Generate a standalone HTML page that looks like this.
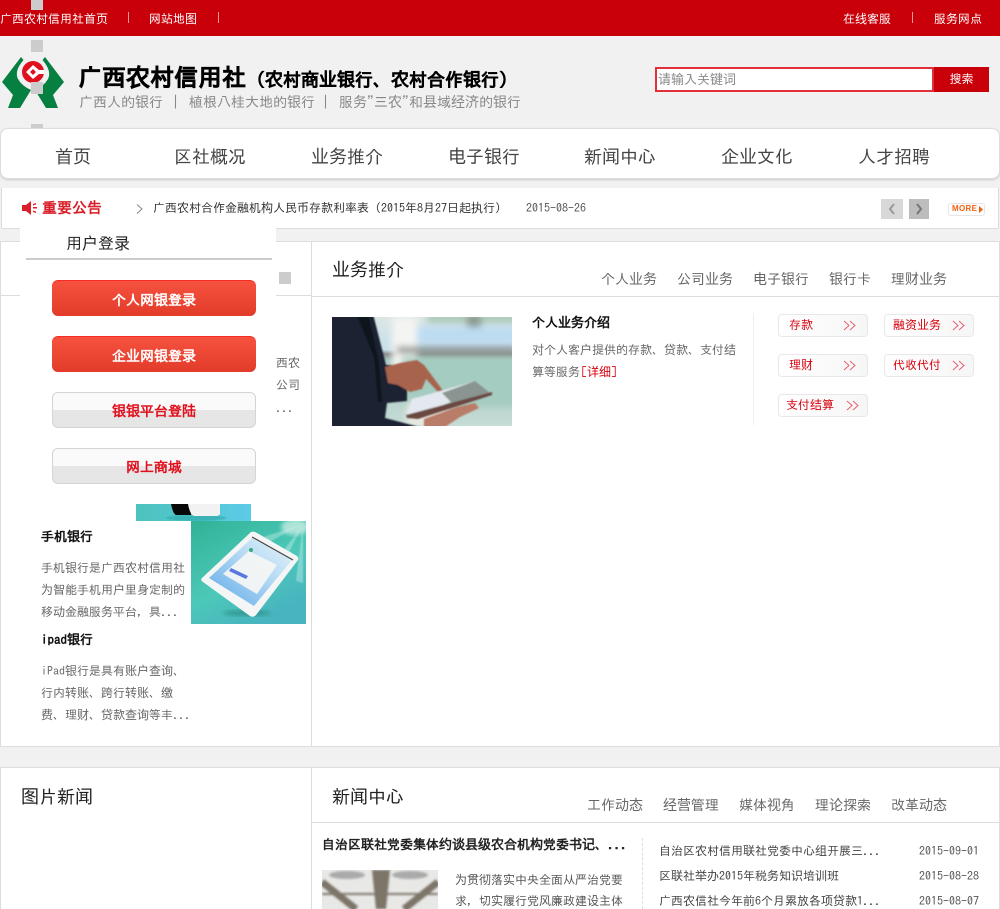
<!DOCTYPE html>
<html style="height:909px;overflow:hidden"><head><meta charset="utf-8"><title>广西农村信用社</title>
<style>
html,body{margin:0;padding:0}
body{width:1000px;height:909px;overflow:hidden;position:relative;background:#f1f1f1;font-family:"IPAGothic","WenQuanYi Zen Hei",sans-serif;font-size:12px}
body *{box-sizing:border-box}
.a{position:absolute}
.t{position:absolute;white-space:nowrap;line-height:20px;height:20px}
.sq{position:absolute;left:31px;width:12px;background:#ccc}
.sep{position:absolute;top:12px;width:1px;height:11px;background:#f09a9e}
.nv{position:absolute;top:144px;width:100px;text-align:center;font-size:18px;line-height:26px;color:#444;white-space:nowrap}
.g{color:#666}
.bh{font-size:13px;font-weight:bold;color:#111}
.btn{position:absolute;left:52px;width:204px;height:36px;border-radius:6px;text-align:center;font-weight:bold;font-size:14px;line-height:38px;color:#fff;background:linear-gradient(#f6523f,#e23b2a);border-top:1px solid #f52c25}
.btn.w{background:linear-gradient(#fafafa 50%,#e6e6e6 50%);border:1px solid #d4d4d4;color:#e0101e;line-height:36px}
.rb{position:absolute;width:90px;height:23px;border:1px solid #e8e8e8;border-radius:4px;background:linear-gradient(90deg,#fff,#f6f6f6);color:#d8000f;line-height:21px}
.rb span{position:absolute;top:0;white-space:nowrap}
.rb svg{position:absolute;top:5px}
.tab{position:absolute;font-size:14px;color:#666;line-height:20px;white-space:nowrap}
</style></head><body>
<div class="a" style="left:0;top:0;width:1000px;height:36px;background:#c9000a"></div>
<div class="sq" style="top:0;height:10px"></div>
<div class="sq" style="top:40px;height:12px"></div>
<div class="sq" style="top:124px;height:6px"></div>
<div class="t" style="left:0;top:9px;color:#fff">广西农村信用社首页</div>
<div class="sep" style="left:128px"></div>
<div class="t" style="left:149px;top:9px;color:#fff">网站地图</div>
<div class="sep" style="left:218px"></div>
<div class="t" style="left:843px;top:9px;color:#fff">在线客服</div>
<div class="sep" style="left:912px"></div>
<div class="t" style="left:934px;top:9px;color:#fff">服务网点</div>

<svg class="a" style="left:0;top:55px" width="66" height="56" viewBox="0 0 66 56">
<path fill="#058040" d="M21 2L23.500 5Q14 16 18 24Q22 31 31 35L20 53H8L13 40L2 27Z"/>
<path fill="#058040" d="M45 2L42.500 5Q52 16 48 24Q44 31 35 35L46 53H58L53 40L64 27Z"/>
<circle cx="33" cy="17" r="11" fill="#e0101e"/>
<path fill="#fff" d="M33 10L39 15H44V19H39L33 24L26 17Z"/><path fill="#e0101e" d="M33 14L36 17L33 20L30 17Z"/>
</svg>
<div class="sq" style="top:82px;height:12px"></div>

<div class="t" style="left:78px;top:60px;height:34px;line-height:34px;font-size:24px;font-weight:bold;color:#000;-webkit-text-stroke:.4px #000">广西农村信用社</div>
<div class="t" style="left:247px;top:65px;height:30px;line-height:30px;font-size:18px;font-weight:bold;color:#000;-webkit-text-stroke:.2px #000">（农村商业银行、农村合作银行）</div>
<div class="t" style="left:79px;top:92px;font-size:14px;color:#888">广西人的银行</div>
<div class="t" style="left:172px;top:92px;font-size:14px;color:#888">|</div>
<div class="t" style="left:189px;top:92px;font-size:14px;color:#888">植根八桂大地的银行</div>
<div class="t" style="left:322px;top:92px;font-size:14px;color:#888">|</div>
<div class="t" style="left:339px;top:92px;font-size:14px;color:#888">服务"三农"和县域经济的银行</div>

<div class="a" style="left:655px;top:67px;width:279px;height:25px;background:#fff;border:2px solid #e2303a"></div>
<div class="t" style="left:658px;top:70px;color:#888;font-size:13px">请输入关键词</div>
<div class="a" style="left:934px;top:67px;width:55px;height:25px;background:#c9000a;color:#fff;text-align:center;line-height:24px">搜索</div>

<div class="a" style="left:0;top:128px;width:1000px;height:51px;background:#fff;border:1px solid #ddd;border-radius:8px;box-shadow:0 1px 2px #ccc"></div>
<div class="nv" style="left:23px">首页</div>
<div class="nv" style="left:160px">区社概况</div>
<div class="nv" style="left:297px">业务推介</div>
<div class="nv" style="left:434px">电子银行</div>
<div class="nv" style="left:570px">新闻中心</div>
<div class="nv" style="left:707px">企业文化</div>
<div class="nv" style="left:844px">人才招聘</div>

<div class="a" style="left:1px;top:188px;width:998px;height:41px;background:#fff;border:1px solid #ddd;border-top:0"></div>
<svg class="a" style="left:22px;top:201px" width="16" height="14" viewBox="0 0 16 14"><path fill="#d9202a" d="M0 4H4L9 0V14L4 10H0Z"/><path fill="#d9202a" d="M11 3l3-1v1.500l-3 1zM11 6h4v1.500h-4zM11 9.500l3 1V12l-3-1z"/></svg>
<div class="t" style="left:42px;top:198px;font-weight:bold;color:#d9202a;font-size:15px">重要公告</div>
<svg class="a" style="left:136px;top:204px" width="8" height="10" viewBox="0 0 8 10"><path fill="none" stroke="#888" d="M1 0.500L6 5L1 9.500"/></svg>
<div class="t" style="left:153px;top:198px;color:#333">广西农村合作金融机构人民币存款利率表（2015年8月27日起执行）</div>
<div class="t" style="left:526px;top:198px;color:#555">2015-08-26</div>
<div class="a" style="left:881px;top:199px;width:22px;height:20px;background:#d8d8d8"></div>
<svg class="a" style="left:881px;top:199px" width="22" height="20"><path fill="none" stroke="#999" stroke-width="2" d="M13 5L9 10L13 15"/></svg>
<div class="a" style="left:909px;top:199px;width:20px;height:20px;background:#bdbdbd"></div>
<svg class="a" style="left:909px;top:199px" width="20" height="20"><path fill="none" stroke="#777" stroke-width="2" d="M8 5L12 10L8 15"/></svg>
<div class="a" style="left:948px;top:203px;width:37px;height:13px;border:1px solid #e5e5e5;border-radius:3px;background:#fff"></div>
<div class="t" style="left:952px;top:199px;font-family:'Liberation Sans',sans-serif;font-size:8px;font-weight:bold;color:#f06010;letter-spacing:.3px">MORE</div>
<svg class="a" style="left:979px;top:206px" width="4" height="7"><path fill="#f06010" d="M0 0L4 3.500L0 7Z"/></svg>

<div class="a" style="left:0;top:241px;width:1000px;height:506px;background:#fff;border:1px solid #ddd"></div>
<div class="a" style="left:311px;top:241px;width:1px;height:505px;background:#ddd"></div>
<div class="a" style="left:0;top:295px;width:311px;height:1px;background:#ddd"></div>
<div class="a" style="left:311px;top:296px;width:689px;height:1px;background:#ddd"></div>
<div class="a" style="left:279px;top:272px;width:12px;height:12px;background:#ccc"></div>

<div class="t" style="left:276px;top:353px;color:#666;font-size:12px">西农</div>
<div class="t" style="left:276px;top:375px;color:#666;font-size:12px">公司</div>
<div class="t" style="left:276px;top:398px;color:#666;font-size:12px">...</div>

<div class="a" style="left:20px;top:228px;width:256px;height:276px;background:#fff"></div>
<div class="t" style="left:66px;top:233px;font-size:16px;color:#222">用户登录</div>
<div class="a" style="left:26px;top:258px;width:246px;height:2px;background:#ccc"></div>
<div class="btn" style="top:280px">个人网银登录</div>
<div class="btn" style="top:336px">企业网银登录</div>
<div class="btn w" style="top:392px">银银平台登陆</div>
<div class="btn w" style="top:448px">网上商城</div>

<svg class="a" style="left:136px;top:504px" width="115" height="17" viewBox="0 0 115 17">
<defs><linearGradient id="s1"><stop offset="0" stop-color="#4cc3bd"/><stop offset="1" stop-color="#5ccbe8"/></linearGradient><filter id="b1"><feGaussianBlur stdDeviation=".6"/></filter></defs>
<rect width="115" height="17" fill="url(#s1)"/>
<ellipse cx="60" cy="14" rx="30" ry="3" fill="#3aa" opacity=".7" filter="url(#b1)"/>
<path fill="#080808" d="M35 0H55V11H40Q37 10 35 0Z"/><path fill="#f2f2f2" d="M52 0H84V10Q83 12 80 12H58Q54 11 52 0Z"/>
</svg>
<svg class="a" style="left:191px;top:521px" width="115" height="103" viewBox="0 0 115 103">
<defs>
<linearGradient id="s2" x1="0" y1="0" x2=".6" y2="1"><stop offset="0" stop-color="#30b296"/><stop offset=".6" stop-color="#4cc8b8"/><stop offset="1" stop-color="#48b4c0"/></linearGradient>
<linearGradient id="s3" x1="0" y1="1" x2="1" y2="0"><stop offset="0" stop-color="#5ca8e8"/><stop offset=".6" stop-color="#b8dcf4"/><stop offset="1" stop-color="#e8f4f8"/></linearGradient>
<filter id="b2"><feGaussianBlur stdDeviation="2"/></filter><filter id="b3"><feGaussianBlur stdDeviation=".5"/></filter></defs>
<rect width="115" height="103" fill="url(#s2)"/>
<g fill="#fff" opacity=".3" filter="url(#b3)"><path d="M112 3L60 20L65 28Z"/><path d="M112 3L85 40L92 44Z"/><path d="M112 3L105 60L112 62Z"/></g>
<ellipse cx="104" cy="6" rx="14" ry="8" fill="#c8ece4" opacity=".8" filter="url(#b2)"/>
<ellipse cx="56" cy="92" rx="24" ry="3" fill="#2a8a80" opacity=".7" filter="url(#b2)"/>
<path fill="#f4f6f6" d="M60 11Q63 10 66 12L106 35Q108 37 107 39L65 94Q62 97 59 95L12 61Q9 59 11 57Z"/>
<path fill="url(#s3)" d="M61 17L101 39L63 85L18 57Z"/>
<path d="M61 16L102 39" stroke="#444" stroke-width="1.200"/>
<path fill="#f4f6f4" d="M58 30L86 44L66 73L32 53Z" opacity=".95"/>
<path fill="#5878e0" d="M40 47L57 55L55 58L38 50Z"/>
<circle cx="60" cy="29" r="2" fill="#3a7"/>
</svg>

<div class="t bh" style="left:41px;top:527px">手机银行</div>
<div class="t g" style="left:41px;top:558px">手机银行是广西农村信用社</div>
<div class="t g" style="left:41px;top:580px">为智能手机用户里身定制的</div>
<div class="t g" style="left:41px;top:602px">移动金融服务平台，具...</div>
<div class="t bh" style="left:41px;top:630px">ipad银行</div>
<div class="t g" style="left:41px;top:661px">iPad银行是具有账户查询、</div>
<div class="t g" style="left:41px;top:683px">行内转账、跨行转账、缴</div>
<div class="t g" style="left:41px;top:705px">费、理财、贷款查询等丰...</div>

<div class="t" style="left:332px;top:258px;height:24px;line-height:24px;font-size:18px;color:#222">业务推介</div>
<div class="tab" style="left:601px;top:269px">个人业务</div>
<div class="tab" style="left:677px;top:269px">公司业务</div>
<div class="tab" style="left:753px;top:269px">电子银行</div>
<div class="tab" style="left:829px;top:269px">银行卡</div>
<div class="tab" style="left:891px;top:269px">理财业务</div>

<svg class="a" style="left:332px;top:317px" width="180" height="109" viewBox="0 0 180 109">
<defs><filter id="b4" x="-10%" y="-10%" width="120%" height="120%"><feGaussianBlur stdDeviation="3.500"/></filter><filter id="b5"><feGaussianBlur stdDeviation=".8"/></filter>
<linearGradient id="p1" x1="0" y1="0" x2="0" y2="1"><stop offset="0" stop-color="#dde6e4"/><stop offset=".3" stop-color="#c6e0ec"/><stop offset=".34" stop-color="#8a8a86"/><stop offset=".4" stop-color="#a8c8c0"/><stop offset="1" stop-color="#c6dcd6"/></linearGradient></defs>
<rect width="180" height="109" fill="url(#p1)"/>
<g filter="url(#b4)">
<rect x="95" y="-3" width="90" height="9" fill="#a8c8b8"/><rect x="135" y="-3" width="14" height="14" fill="#8a9a8c"/>
<rect x="65" y="10" width="120" height="16" fill="#bcdcf2"/><rect x="60" y="0" width="25" height="60" fill="#f4f4f2"/>
<rect x="65" y="30" width="120" height="6" fill="#808480"/>
<rect x="70" y="40" width="115" height="50" fill="#a4ccc0"/><rect x="75" y="85" width="40" height="24" fill="#eaeae4"/></g>
<g filter="url(#b5)">
<path fill="#1c2230" d="M-3 -3H41L51 36L54 48H60L75 73V84L55 86L53 101L95 112H-3Z"/>
<path fill="#10131c" d="M24 -3L36 -3L47 45L50 85L46 85L42 40Z"/>
<path fill="#a8644e" d="M53 50L68 46L85 43L92 48L112 75L107 76L94 62L90 72L78 75L66 68L56 66Z"/>
<path fill="#e4e8f0" d="M75 98L80 82L143 64L150 70L88 98Z"/>
<path fill="#8a9490" d="M110 76L143 64L158 76L122 88Z"/>
<path fill="#6a4640" d="M74 98L160 75L160 78L86 102L75 101Z"/>
<path fill="#b87c68" d="M92 112L92 102L125 90L143 86L147 91L128 100L110 112Z"/>
</g>
</svg>

<div class="t bh" style="left:532px;top:313px">个人业务介绍</div>
<div class="t g" style="left:532px;top:340px">对个人客户提供的存款、贷款、支付结</div>
<div class="t g" style="left:532px;top:362px">算等服务<span style="color:#d8000f;margin-left:1px">[详细]</span></div>
<div class="a" style="left:753px;top:313px;width:1px;height:112px;background:#eee"></div>

<div class="rb" style="left:778px;top:314px"><span style="left:10px">存款</span><svg style="left:64px" width="14" height="11"><path fill="none" stroke="#e8606a" d="M1 1L6 5.500L1 10M7 1L12 5.500L7 10"/></svg></div>
<div class="rb" style="left:884px;top:314px"><span style="left:8px">融资业务</span><svg style="left:67px" width="14" height="11"><path fill="none" stroke="#e8606a" d="M1 1L6 5.500L1 10M7 1L12 5.500L7 10"/></svg></div>
<div class="rb" style="left:778px;top:354px"><span style="left:10px">理财</span><svg style="left:64px" width="14" height="11"><path fill="none" stroke="#e8606a" d="M1 1L6 5.500L1 10M7 1L12 5.500L7 10"/></svg></div>
<div class="rb" style="left:884px;top:354px"><span style="left:8px">代收代付</span><svg style="left:67px" width="14" height="11"><path fill="none" stroke="#e8606a" d="M1 1L6 5.500L1 10M7 1L12 5.500L7 10"/></svg></div>
<div class="rb" style="left:778px;top:394px"><span style="left:7px">支付结算</span><svg style="left:67px" width="14" height="11"><path fill="none" stroke="#e8606a" d="M1 1L6 5.500L1 10M7 1L12 5.500L7 10"/></svg></div>

<div class="a" style="left:0;top:767px;width:1000px;height:142px;background:#fff;border:1px solid #ddd;border-bottom:0"></div>
<div class="a" style="left:311px;top:767px;width:1px;height:142px;background:#ddd"></div>
<div class="a" style="left:311px;top:822px;width:689px;height:1px;background:#ddd"></div>
<div class="t" style="left:21px;top:785px;height:24px;line-height:24px;font-size:18px;color:#222">图片新闻</div>
<div class="t" style="left:332px;top:785px;height:24px;line-height:24px;font-size:18px;color:#222">新闻中心</div>
<div class="tab" style="left:587px;top:795px">工作动态</div>
<div class="tab" style="left:663px;top:795px">经营管理</div>
<div class="tab" style="left:739px;top:795px">媒体视角</div>
<div class="tab" style="left:815px;top:795px">理论探索</div>
<div class="tab" style="left:891px;top:795px">改革动态</div>

<div class="t bh" style="left:322px;top:835px;color:#222">自治区联社党委集体约谈县级农合机构党委书记、...</div>
<div class="t" style="left:455px;top:870px;color:#555">为贯彻落实中央全面从严治党要</div>
<div class="t" style="left:455px;top:891px;color:#555;height:18px;overflow:hidden">求，切实履行党风廉政建设主体</div>
<svg class="a" style="left:322px;top:870px" width="116" height="39" viewBox="0 0 116 39">
<defs><filter id="b6"><feGaussianBlur stdDeviation="1"/></filter></defs>
<rect width="116" height="39" fill="#e8e8e6"/>
<g filter="url(#b6)"><ellipse cx="25" cy="5" rx="18" ry="4" fill="#aaa"/><ellipse cx="88" cy="5" rx="18" ry="4" fill="#aaa"/>
<path stroke="#7c7468" stroke-width="7" fill="none" d="M0 12L34 39M116 12L82 39"/>
<path fill="#7c7468" d="M50 0H68L64 39H54Z"/>
<path stroke="#7c7468" stroke-width="2" d="M0 24H116"/></g>
</svg>
<div class="a" style="left:642px;top:838px;height:71px;border-left:1px dashed #ddd"></div>
<div class="t" style="left:659px;top:841px;color:#444">自治区农村信用联社党委中心组开展三...</div>
<div class="t" style="left:659px;top:866px;color:#444">区联社举办2015年税务知识培训班</div>
<div class="t" style="left:659px;top:891px;color:#444;height:18px;overflow:hidden">广西农信社今年前6个月累放各项贷款1...</div>
<div class="t" style="left:919px;top:841px;color:#555">2015-09-01</div>
<div class="t" style="left:919px;top:866px;color:#555">2015-08-28</div>
<div class="t" style="left:919px;top:891px;color:#555;height:18px;overflow:hidden">2015-08-07</div>
</body></html>
